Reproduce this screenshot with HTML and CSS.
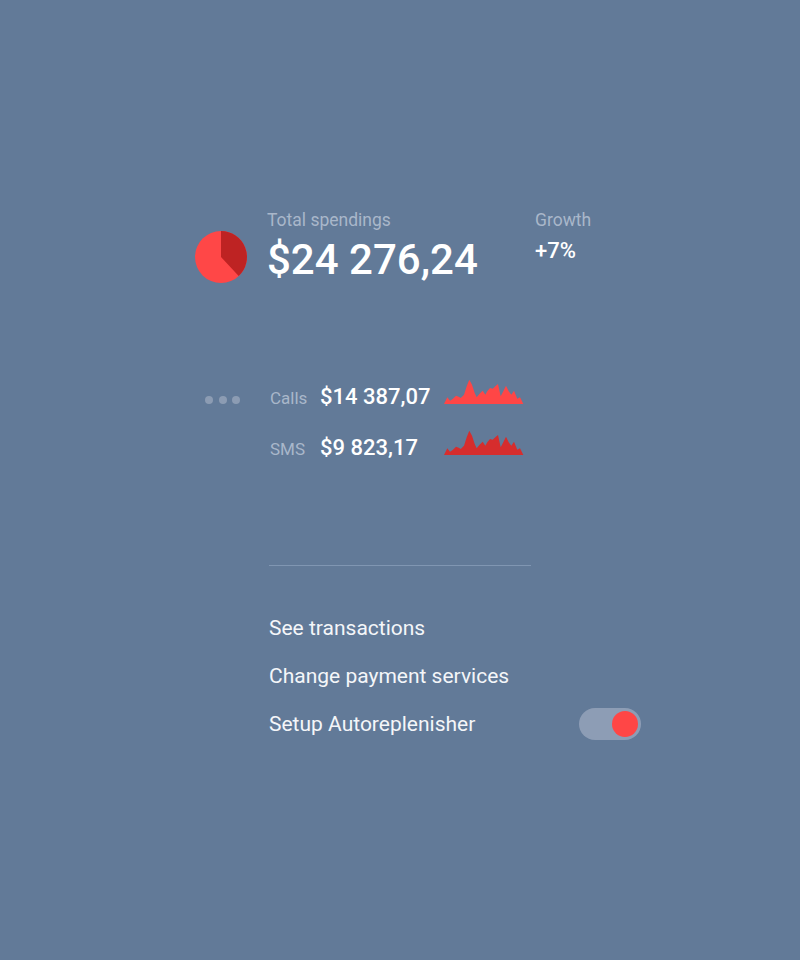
FILE: index.html
```html
<!DOCTYPE html>
<html lang="en">
<head>
  <meta charset="UTF-8">
  <title>Spendings</title>
  <link rel="stylesheet" href="styles.css">
</head>
<body>
  <div class="page">
    <div class="summary">
      <svg class="pie" width="52" height="52" viewBox="0 0 52 52">
        <circle cx="26" cy="26" r="26" fill="#ff4747"/>
        <path d="M26 26 L26 0 A26 26 0 0 1 43.7 45 Z" fill="#be2323"/>
      </svg>
      <div class="total">
        <div class="label">Total spendings</div>
        <div class="amount">$24 276,24</div>
      </div>
      <div class="growth">
        <div class="label">Growth</div>
        <div class="growth-value">+7%</div>
      </div>
    </div>

    <div class="breakdown">
      <div class="dots"><span></span><span></span><span></span></div>
      <div class="rows">
        <div class="row">
          <span class="row-label">Calls</span>
          <span class="row-value">$14 387,07</span>
          <svg class="spark" width="80" height="25" viewBox="0 0 80 25">
            <polygon fill="#ff4646" points="0,25 3.3,18.3 6,21.7 8.7,20 12,16.7 14.7,17.7 16.7,19 20,15.7 22.7,7.3 25.3,0.7 28,5.7 30.7,14 32.7,18.3 35.3,15 38.7,11.7 41.3,15.7 43.3,12.3 46,9 48.7,9.7 51.3,7.3 54,5 56.7,17.3 59.3,12.3 62,6.7 64.7,12.3 67.3,15.7 70,11.7 73.3,19.7 76,18.3 78,22.3 79.3,25"/>
          </svg>
        </div>
        <div class="row">
          <span class="row-label">SMS</span>
          <span class="row-value">$9 823,17</span>
          <svg class="spark" width="80" height="25" viewBox="0 0 80 25">
            <polygon fill="#d62d2d" points="0,25 3.3,18.3 6,21.7 8.7,20 12,16.7 14.7,17.7 16.7,19 20,15.7 22.7,7.3 25.3,0.7 28,5.7 30.7,14 32.7,18.3 35.3,15 38.7,11.7 41.3,15.7 43.3,12.3 46,9 48.7,9.7 51.3,7.3 54,5 56.7,17.3 59.3,12.3 62,6.7 64.7,12.3 67.3,15.7 70,11.7 73.3,19.7 76,18.3 78,22.3 79.3,25"/>
          </svg>
        </div>
      </div>
    </div>

    <div class="divider"></div>

    <div class="menu">
      <div class="menu-item">See transactions</div>
      <div class="menu-item">Change payment services</div>
      <div class="menu-item">
        <span>Setup Autoreplenisher</span>
        <span class="toggle"><span class="knob"></span></span>
      </div>
    </div>
  </div>
</body>
</html>
```

FILE: styles.css
```css
body {
  margin: 0;
  background: #627a98;
  font-family: Roboto, "Liberation Sans", sans-serif;
  color: #ffffff;
}
.page {
  padding-top: 210px;
  padding-left: 195px;
}
.summary {
  display: flex;
  align-items: flex-start;
}
.pie {
  margin-top: 21px;
  margin-right: 20px;
}
.total {
  width: 268px;
}
.label {
  font-size: 17.5px;
  line-height: 20px;
  color: #a9b7ca;
}
.amount {
  margin-top: 7px;
  font-size: 42px;
  line-height: 46px;
  font-weight: 500;
}
.growth-value {
  margin-top: 9px;
  font-size: 22px;
  line-height: 24px;
  font-weight: 500;
}
.breakdown {
  display: flex;
  margin-top: 96px;
}
.dots {
  width: 65px;
  padding-left: 10px;
  margin-top: 17px;
  display: flex;
  gap: 5.5px;
}
.dots span {
  width: 8px;
  height: 8px;
  border-radius: 50%;
  background: #8c9cb3;
}
.rows {
  display: flex;
  flex-direction: column;
  gap: 21px;
}
.row {
  display: flex;
  align-items: baseline;
  height: 30px;
  line-height: 30px;
}
.row-label {
  width: 50px;
  font-size: 17px;
  color: #a9b7ca;
}
.row-value {
  width: 124px;
  font-size: 22px;
  font-weight: 500;
}
.divider {
  width: 262px;
  height: 1px;
  margin: 105px 0 0 74px;
  background: #8096b2;
}
.menu {
  margin: 38px 0 0 74px;
  width: 372px;
}
.menu-item {
  display: flex;
  justify-content: space-between;
  align-items: center;
  font-size: 21px;
  line-height: 48px;
  color: #f4f6f9;
}
.toggle {
  width: 62px;
  height: 32px;
  border-radius: 16px;
  background: #8d9db5;
  display: flex;
  align-items: center;
  justify-content: flex-end;
  padding-right: 3px;
  box-sizing: border-box;
}
.knob {
  width: 26px;
  height: 26px;
  border-radius: 50%;
  background: #ff4646;
}
```
